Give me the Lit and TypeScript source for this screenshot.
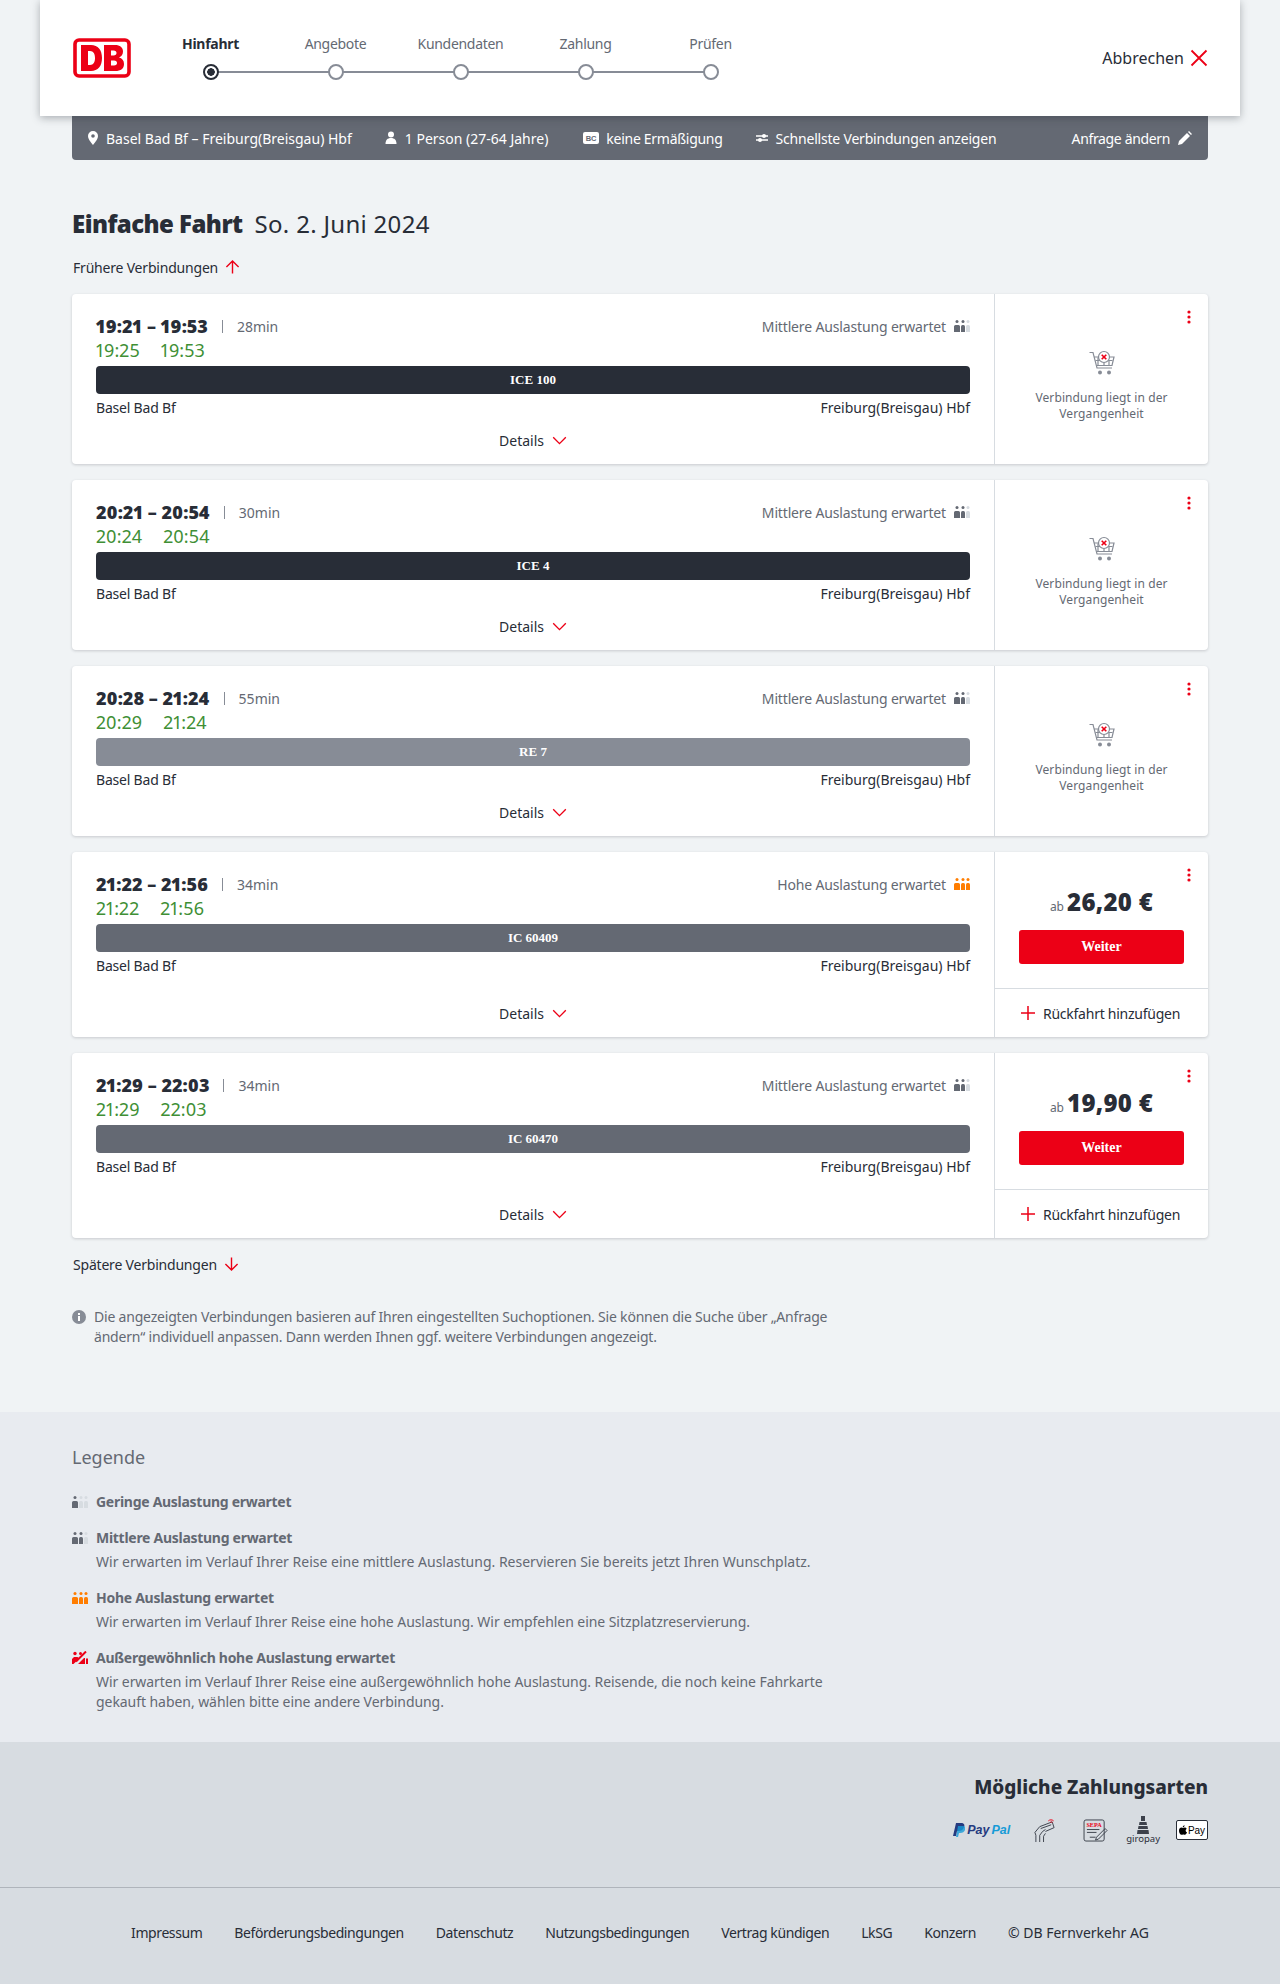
import { LitElement, html, css, svg } from "lit";
import { customElement } from "lit/decorators.js";

interface Connection {
  time: string;
  dur: string;
  dep: string;
  arr: string;
  train: string;
  trainClass: string;
  level: "mid" | "high";
  price?: string;
}

const CONNECTIONS: Connection[] = [
  { time: "19:21 – 19:53", dur: "28min", dep: "19:25", arr: "19:53", train: "ICE 100", trainClass: "ice", level: "mid" },
  { time: "20:21 – 20:54", dur: "30min", dep: "20:24", arr: "20:54", train: "ICE 4", trainClass: "ice", level: "mid" },
  { time: "20:28 – 21:24", dur: "55min", dep: "20:29", arr: "21:24", train: "RE 7", trainClass: "re", level: "mid" },
  { time: "21:22 – 21:56", dur: "34min", dep: "21:22", arr: "21:56", train: "IC 60409", trainClass: "ic", level: "high", price: "26,20 €" },
  { time: "21:29 – 22:03", dur: "34min", dep: "21:29", arr: "22:03", train: "IC 60470", trainClass: "ic", level: "mid", price: "19,90 €" },
];

const STEPS = ["Hinfahrt", "Angebote", "Kundendaten", "Zahlung", "Prüfen"];
const FOOTER = ["Impressum", "Beförderungsbedingungen", "Datenschutz", "Nutzungsbedingungen", "Vertrag kündigen", "LkSG", "Konzern", "© DB Fernverkehr AG"];

// three little seated people, the first `filled` ones in the active colour
function occupancy(filled: number, color: string) {
  const light = "#d7dce1";
  const person = (x: number, w: number, on: boolean) => svg`
    <circle cx=${x + w / 2} cy="2.500" r="1.500" fill=${on ? color : light}></circle>
    <path d="M${x} 13V7.500a1.500 1.500 0 0 1 1.500-1.500h${w - 3}a1.500 1.500 0 0 1 1.500 1.500V13z" fill=${on ? color : light}></path>`;
  return html`<svg class="occ" viewBox="0 0 16 14" width="16" height="14">
    ${person(0, 6, filled > 0)}${person(7, 4, filled > 1)}${person(12, 4, filled > 2)}
  </svg>`;
}

function occupancyMax() {
  return html`<svg class="occ" viewBox="0 0 16 14" width="16" height="14">
    <circle cx="3" cy="2.500" r="1.700" fill="#ec0016"></circle>
    <circle cx="8.500" cy="2.500" r="1.500" fill="#ec0016"></circle>
    <path d="M0 13V8l2-2h3.500l2 1.500L1.500 13zM6 13l6-6h1v6zM14 7.500h2V13h-2z" fill="#ec0016"></path>
    <path d="M4 10.500L14 .5" stroke="#ec0016" stroke-width="2"></path>
  </svg>`;
}

const chevron = html`<svg viewBox="0 0 16 10" width="15" height="9"><path d="M1 1.500l7 7 7-7" fill="none" stroke="#ec0016" stroke-width="1.500"></path></svg>`;
const arrowUp = html`<svg viewBox="0 0 16 16" width="15" height="16"><path d="M8 15V1.500M1.500 8L8 1.500 14.500 8" fill="none" stroke="#ec0016" stroke-width="1.500"></path></svg>`;
const arrowDown = html`<svg viewBox="0 0 16 16" width="15" height="16"><path d="M8 1v13.500M1.500 8L8 14.500 14.500 8" fill="none" stroke="#ec0016" stroke-width="1.500"></path></svg>`;
const dots = html`<svg class="dots" viewBox="0 0 4 14" width="4" height="14"><circle cx="2" cy="2" r="1.600" fill="#ec0016"></circle><circle cx="2" cy="7" r="1.600" fill="#ec0016"></circle><circle cx="2" cy="12" r="1.600" fill="#ec0016"></circle></svg>`;

const cart = html`<svg viewBox="0 0 26 26" width="26" height="26" fill="none" stroke="#878c96" stroke-width="1.200">
  <path d="M0.500 2.500h3.500l4 15.500h15"></path>
  <path d="M5 7h5M19 7h6l-2 8.500H8"></path>
  <path d="M6.500 10.500h17M9 7.500v8M15 11v4.500M20 11v4.500"></path>
  <circle cx="15" cy="7" r="5.500" fill="#fff"></circle>
  <path d="M12.700 4.700l4.600 4.600M17.300 4.700l-4.600 4.600" stroke="#ec0016" stroke-width="1.600"></path>
  <circle cx="11" cy="22.500" r="2" fill="#878c96" stroke="none"></circle>
  <circle cx="20" cy="22.500" r="2" fill="#878c96" stroke="none"></circle>
</svg>`;

@customElement("app-root")
export class AppRoot extends LitElement {
  static styles = css`
    :host {
      display: block;
      min-height: 1984px;
      background: #f0f3f5;
      color: #282d37;
      font-family: "Noto Sans", sans-serif;
      font-size: 14px;
    }

    /* header */
    .head {
      width: 1200px;
      height: 116px;
      margin: 0 auto;
      box-sizing: border-box;
      padding: 0 32px;
      background: #fff;
      display: flex;
      align-items: center;
      box-shadow: 0 2px 8px rgba(40, 45, 55, 0.35);
      position: relative;
      z-index: 1;
    }
    .logo { display: block; }
    .steps { display: flex; margin-left: 16px; align-self: flex-start; padding-top: 34px; }
    .step {
      width: 125px;
      display: flex;
      flex-direction: column;
      align-items: center;
      gap: 10px;
      color: #646973;
      font-size: 14px;
      line-height: 20px;
      letter-spacing: -0.3px;
      position: relative;
    }
    .step.on { color: #282d37; font-weight: 700; }
    .step:not(:last-child)::after {
      content: "";
      position: absolute;
      left: 50%;
      width: 125px;
      top: 37px;
      height: 2px;
      background: #878c96;
    }
    .circle {
      width: 16px;
      height: 16px;
      box-sizing: border-box;
      border-radius: 50%;
      border: 2px solid #878c96;
      background: #fff;
      position: relative;
      z-index: 1;
    }
    .step.on .circle {
      border-color: #282d37;
      background: radial-gradient(circle, #282d37 0 3.500px, #fff 4px);
    }
    .abort { margin-left: auto; display: flex; align-items: center; gap: 6px; font-size: 16px; }

    /* request summary */
    .bar {
      width: 1136px;
      height: 44px;
      margin: 0 auto;
      box-sizing: border-box;
      padding: 0 16px 0 15px;
      background: #646973;
      color: #fff;
      display: flex;
      align-items: center;
      border-radius: 0 0 4px 4px;
      font-size: 14px;
    }
    .bar span.item { display: flex; align-items: center; gap: 7px; margin-right: 32px; }
    .bar span.person { margin-right: 35px; }
    .bar span.tight { letter-spacing: -0.28px; }
    .bar span.fast { letter-spacing: -0.2px; }
    .bar .edit { margin: 0 0 0 auto; display: flex; align-items: center; gap: 8px; letter-spacing: -0.35px; }

    main { width: 1136px; margin: 0 auto; }
    h1 { margin: 0; padding-top: 46px; font-size: 24px; line-height: 36px; font-weight: 400; display: flex; gap: 12px; letter-spacing: 0.3px; }
    h1 b { font-weight: 900; letter-spacing: -0.55px; }
    .more { display: flex; align-items: center; gap: 7px; padding-left: 1px; height: 20px; letter-spacing: -0.2px; }
    .more.up { margin-top: 15px; margin-bottom: 17px; }
    .more.down { margin-top: 16px; }

    /* connection cards */
    .list { display: flex; flex-direction: column; gap: 16px; }
    .card {
      display: flex;
      background: #fff;
      border-radius: 4px;
      box-shadow: 0 1px 3px rgba(40, 45, 55, 0.2);
      min-height: 170px;
    }
    .left { flex: 1; display: flex; flex-direction: column; padding: 0 24px; box-sizing: border-box; }
    .top { display: flex; align-items: center; height: 20px; margin-top: 22px; }
    .time { font-size: 18px; font-weight: 900; font-variant-numeric: proportional-nums; }
    .sep { width: 1px; height: 13px; background: #878c96; margin: 0 14px; }
    .dur { color: #646973; font-size: 14px; }
    .load { margin-left: auto; display: flex; align-items: center; gap: 8px; color: #646973; letter-spacing: -0.15px; }
    .green { display: flex; gap: 21px; color: #408f35; font-size: 18px; line-height: 24px; margin-top: 2px; font-variant-numeric: proportional-nums; letter-spacing: 0.1px; }
    .train {
      height: 28px;
      border-radius: 4px;
      margin-top: 4px;
      color: #fff;
      font: 700 13px/28px "Liberation Serif", serif;
      text-align: center;
    }
    .train.ice { background: #282d37; }
    .train.re { background: #878c96; }
    .train.ic { background: #646973; }
    .stations { display: flex; justify-content: space-between; margin-top: 4px; line-height: 20px; }
    .stations span:first-child { letter-spacing: -0.2px; }
    .details { margin-top: auto; height: 44px; padding-bottom: 2px; display: flex; align-items: center; justify-content: center; gap: 8px; }

    .right {
      width: 213px;
      flex: none;
      border-left: 1px solid #d7dce1;
      display: flex;
      flex-direction: column;
      position: relative;
    }
    .dots { position: absolute; top: 16px; right: 17px; }
    .past {
      flex: 1;
      display: flex;
      flex-direction: column;
      align-items: center;
      color: #646973;
      font-size: 12px;
      line-height: 16px;
      letter-spacing: 0.1px;
      text-align: center;
      padding-top: 54px;
      gap: 14px;
    }
    .past svg { margin-top: 2px; }
    .offer { height: 136px; box-sizing: border-box; padding: 32px 24px 0; display: flex; flex-direction: column; }
    .price { display: flex; justify-content: center; align-items: baseline; gap: 3px; height: 36px; }
    .price small { font-size: 12px; color: #646973; }
    .price b { font-size: 24px; font-weight: 900; line-height: 36px; letter-spacing: 0.3px; }
    .btn {
      height: 34px;
      margin-top: 10px;
      background: #ec0016;
      color: #fff;
      border-radius: 3px;
      font: 700 14px/34px "Liberation Serif", serif;
      text-align: center;
    }
    .back {
      height: 48px;
      border-top: 1px solid #d7dce1;
      display: flex;
      align-items: center;
      gap: 7px;
      padding-left: 25px;
      letter-spacing: -0.25px;
    }

    .info { display: flex; gap: 8px; margin-top: 33px; color: #646973; line-height: 20px; width: 770px; letter-spacing: -0.2px; }
    .info svg { flex: none; margin-top: 3px; }

    /* legend */
    .legend { margin-top: 65px; height: 330px; box-sizing: border-box; background: #e8ebf0; color: #646973; }
    .inner { width: 1136px; margin: 0 auto; }
    .legend h2 { margin: 0; padding-top: 32px; font-size: 18px; font-weight: 400; line-height: 26px; }
    .rows { margin-top: 22px; display: flex; flex-direction: column; gap: 16px; }
    .row { display: grid; grid-template-columns: 24px 760px; line-height: 20px; }
    .row svg { margin-top: 3px; }
    .row b { display: block; font-weight: 700; letter-spacing: -0.28px; }
    .row p { margin: 4px 0 0; letter-spacing: -0.06px; }
    .row:nth-child(2) p { letter-spacing: 0; }

    /* payment and footer */
    .pay { background: #d7dce1; height: 242px; }
    .pay-top { height: 146px; box-sizing: border-box; padding-top: 30px; border-bottom: 1px solid #afb4bb; }
    .pay h3 { margin: 0; text-align: right; font-size: 19px; line-height: 30px; font-weight: 800; }
    .logos { display: flex; justify-content: flex-end; align-items: center; gap: 16px; margin-top: 12px; height: 32px; }
    .paypal { font: italic 700 12.500px "Liberation Sans", sans-serif; color: #253b80; display: flex; align-items: center; gap: 2px; margin-right: 7px; }
    .paypal i { color: #179bd7; }
    .sepa { margin-left: 11px; }
    .giro { display: flex; flex-direction: column; align-items: center; font-size: 9.500px; line-height: 10px; }
    .apple {
      width: 32px;
      height: 20px;
      box-sizing: border-box;
      background: #fff;
      border: 1px solid #282d37;
      border-radius: 2px;
      display: flex;
      align-items: center;
      justify-content: center;
      gap: 1px;
      font: 10px "Liberation Sans", sans-serif;
      color: #000;
    }
    .foot { display: flex; justify-content: center; gap: 32px; padding-top: 35px; line-height: 20px; letter-spacing: -0.42px; }
    .foot span:last-child { letter-spacing: 0; }
  `;

  private renderCard(c: Connection) {
    return html`<article class="card">
      <div class="left">
        <div class="top">
          <span class="time">${c.time}</span><i class="sep"></i><span class="dur">${c.dur}</span>
          <span class="load">
            ${c.level === "high" ? "Hohe Auslastung erwartet" : "Mittlere Auslastung erwartet"}
            ${c.level === "high" ? occupancy(3, "#ff7d00") : occupancy(2, "#646973")}
          </span>
        </div>
        <div class="green"><span>${c.dep}</span><span>${c.arr}</span></div>
        <div class="train ${c.trainClass}">${c.train}</div>
        <div class="stations"><span>Basel Bad Bf</span><span>Freiburg(Breisgau) Hbf</span></div>
        <div class="details">Details ${chevron}</div>
      </div>
      <div class="right">
        ${dots}
        ${c.price
          ? html`<div class="offer">
                <div class="price"><small>ab</small><b>${c.price}</b></div>
                <div class="btn">Weiter</div>
              </div>
              <div class="back">
                <svg viewBox="0 0 16 16" width="16" height="16"><path d="M8 1v14M1 8h14" stroke="#ec0016" stroke-width="1.500"></path></svg>
                Rückfahrt hinzufügen
              </div>`
          : html`<div class="past">${cart}<span>Verbindung liegt in der<br />Vergangenheit</span></div>`}
      </div>
    </article>`;
  }

  render() {
    return html`
      <header class="head">
        <svg class="logo" viewBox="0 0 60 40" width="60" height="40">
          <rect x="3" y="2" width="54" height="36" rx="4" fill="#fff" stroke="#ec0016" stroke-width="3.600"></rect>
          <path fill="#ec0016" fill-rule="evenodd" d="M9 7h10c7 0 11 5 11 13s-4 13-11 13H9zM16 13v14h2c3.500 0 5-3 5-7s-1.500-7-5-7zM32 7h11c5 0 8 2.500 8 6.500 0 3-1.500 5-4 6 3 .7 5 3 5 6.500 0 4.500-3 7-9 7H32zM39 12.500v5h2.500c2 0 3-1 3-2.500s-1-2.500-3-2.500zM39 22.500v5h3c2 0 3-1 3-2.500s-1-2.500-3-2.500z"></path>
        </svg>
        <div class="steps">
          ${STEPS.map((s, i) => html`<div class="step ${i === 0 ? "on" : ""}"><span>${s}</span><i class="circle"></i></div>`)}
        </div>
        <div class="abort">
          Abbrechen
          <svg viewBox="0 0 18 18" width="18" height="18"><path d="M1.500 1.500l15 15M16.500 1.500l-15 15" stroke="#ec0016" stroke-width="1.800"></path></svg>
        </div>
      </header>

      <div class="bar">
        <span class="item">
          <svg viewBox="0 0 12 16" width="12" height="16"><path fill="#fff" fill-rule="evenodd" d="M6 1a5 5 0 0 1 5 5c0 3.500-5 9-5 9S1 9.500 1 6a5 5 0 0 1 5-5zm0 3.200a1.800 1.800 0 1 0 0 3.600 1.800 1.800 0 0 0 0-3.600z"></path></svg>
          Basel Bad Bf – Freiburg(Breisgau) Hbf
        </span>
        <span class="item person">
          <svg viewBox="0 0 14 14" width="14" height="14"><circle cx="7" cy="3.500" r="3" fill="#fff"></circle><path fill="#fff" d="M1.500 13c0-4 2-6 5.500-6s5.500 2 5.500 6z"></path></svg>
          1 Person (27-64 Jahre)
        </span>
        <span class="item tight">
          <svg viewBox="0 0 16 12" width="16" height="12"><rect width="16" height="12" rx="2" fill="#fff"></rect><text x="8" y="9" font-size="7.500" font-weight="700" text-anchor="middle" fill="#646973" font-family="Liberation Sans">BC</text></svg>
          keine Ermäßigung
        </span>
        <span class="item fast">
          <svg viewBox="0 0 14 12" width="14" height="12"><path d="M1 4h12M1 8h12" stroke="#fff" stroke-width="1.500"></path><circle cx="9" cy="4" r="2" fill="#fff"></circle><circle cx="5" cy="8" r="2" fill="#fff"></circle></svg>
          Schnellste Verbindungen anzeigen
        </span>
        <span class="edit">
          Anfrage ändern
          <svg viewBox="0 0 14 14" width="14" height="14"><path fill="#fff" d="M0 14l1-4 8-8 3 3-8 8zM10 1l1-1 3 3-1 1z"></path></svg>
        </span>
      </div>

      <main>
        <h1><b>Einfache Fahrt</b><span>So. 2. Juni 2024</span></h1>
        <div class="more up">Frühere Verbindungen ${arrowUp}</div>
        <section class="list">${CONNECTIONS.map((c) => this.renderCard(c))}</section>
        <div class="more down">Spätere Verbindungen ${arrowDown}</div>
        <div class="info">
          <svg viewBox="0 0 14 14" width="14" height="14"><circle cx="7" cy="7" r="7" fill="#878c96"></circle><rect x="6" y="6" width="2" height="5" fill="#fff"></rect><rect x="6" y="3" width="2" height="2" fill="#fff"></rect></svg>
          <span>Die angezeigten Verbindungen basieren auf Ihren eingestellten Suchoptionen. Sie können die Suche über „Anfrage ändern“ individuell anpassen. Dann werden Ihnen ggf. weitere Verbindungen angezeigt.</span>
        </div>
      </main>

      <section class="legend">
        <div class="inner">
          <h2>Legende</h2>
          <div class="rows">
            <div class="row">${occupancy(1, "#646973")}<div><b>Geringe Auslastung erwartet</b></div></div>
            <div class="row">${occupancy(2, "#646973")}<div><b>Mittlere Auslastung erwartet</b><p>Wir erwarten im Verlauf Ihrer Reise eine mittlere Auslastung. Reservieren Sie bereits jetzt Ihren Wunschplatz.</p></div></div>
            <div class="row">${occupancy(3, "#ff7d00")}<div><b>Hohe Auslastung erwartet</b><p>Wir erwarten im Verlauf Ihrer Reise eine hohe Auslastung. Wir empfehlen eine Sitzplatzreservierung.</p></div></div>
            <div class="row">${occupancyMax()}<div><b>Außergewöhnlich hohe Auslastung erwartet</b><p>Wir erwarten im Verlauf Ihrer Reise eine außergewöhnlich hohe Auslastung. Reisende, die noch keine Fahrkarte gekauft haben, wählen bitte eine andere Verbindung.</p></div></div>
          </div>
        </div>
      </section>

      <footer class="pay">
        <div class="pay-top">
          <div class="inner">
            <h3>Mögliche Zahlungsarten</h3>
            <div class="logos">
              <span class="paypal">
                <svg viewBox="0 0 12 14" width="12" height="14"><path fill="#253b80" d="M3 0h5c3 0 4 2 3 4-1 3-3 4-6 4H4l-1 5H0z"></path><path fill="#179bd7" d="M5 3h5c2 0 3 1 2 4-1 2-2 3-5 3H6l-1 4H3z" opacity="0.8"></path></svg>
                Pay<i>Pal</i>
              </span>
              <svg viewBox="0 0 24 26" width="23" height="25" fill="none" stroke="#3c414b" stroke-width="1">
                <path d="M3 25v-7l-1-3 5-6 13-5 2 6-9 4"></path>
                <path d="M7 25v-7l3-4 3-2M11 25v-6l2-3"></path>
                <path d="M8 11l11-4"></path>
                <path d="M16 3c1.500-1.500 4-1.500 5.500 0M18 4.500c.6-.6 1.600-.6 2.200 0" stroke="#ec0016"></path>
              </svg>
              <svg class="sepa" viewBox="0 0 28 24" width="27" height="23" fill="none" stroke="#3c414b" stroke-width="1"><rect x="1" y="1" width="21" height="22" rx="2"></rect><path d="M4 11h13M4 14h10M7 19h6M14 19l9-9 2 2-9 9-3 1z"></path><text x="11.500" y="8" font-size="6.500" font-weight="700" fill="#ec0016" stroke="none" text-anchor="middle" font-family="Liberation Serif">SEPA</text></svg>
              <span class="giro">
                <svg viewBox="0 0 14 18" width="14" height="18"><path fill="#3c414b" d="M5 0h4v5H5zM3.500 6h7l.5 3H3zM2.500 10h9l.5 3H2zM1.500 14h11l.5 4H1z"></path></svg>
                giropay
              </span>
              <span class="apple">
                <svg viewBox="0 0 10 12" width="8" height="10"><path d="M7 0c0 1.500-1 2.700-2.300 2.700C4.600 1.300 5.700.2 7 0zM5 3.500c.8 0 1.400-.5 2.300-.5 1 0 1.800.5 2.300 1.300-2 1.200-1.600 3.800.4 4.600-.6 1.500-1.500 3.100-2.700 3.100-.8 0-1.100-.5-2.100-.5s-1.400.5-2.100.5C1.500 12 0 9.500 0 7c0-2.500 1.500-4 3.100-4 .8 0 1.400.5 1.900.5z"></path></svg>
                Pay
              </span>
            </div>
          </div>
        </div>
        <nav class="foot">${FOOTER.map((f) => html`<span>${f}</span>`)}</nav>
      </footer>
    `;
  }
}
